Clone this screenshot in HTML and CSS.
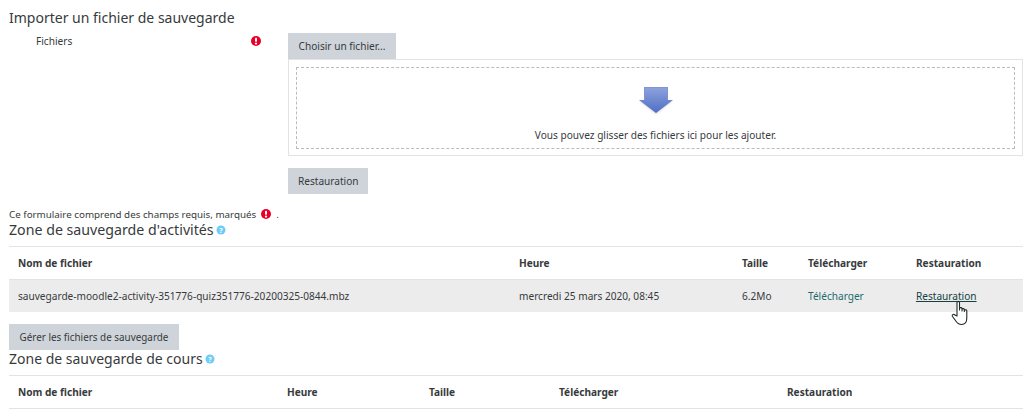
FILE: index.html
```html
<!DOCTYPE html>
<html lang="fr">
<head>
<meta charset="utf-8">
<title>Importer un fichier de sauvegarde</title>
<link rel="stylesheet" href="styles.css">
</head>
<body>
<main class="page">
  <h3 class="title first">Importer un fichier de sauvegarde</h3>
  <form class="form-row">
    <div class="label-col">
      <span>Fichiers</span>
      <svg class="req" viewBox="0 0 10 10" width="10" height="10"><circle cx="5" cy="5" r="5" fill="#e8002a"/><rect x="4" y="1.8" width="2" height="4" rx=".7" fill="#fff"/><circle cx="5" cy="7.6" r="1.1" fill="#fff"/></svg>
    </div>
    <div class="field-col">
      <button type="button" class="btn choose">Choisir un fichier...</button>
      <div class="drop-outer">
        <div class="drop">
          <svg class="arrow" viewBox="0 0 36 30" width="36" height="30">
            <defs>
              <linearGradient id="g" x1="0" y1="0" x2="0" y2="1"><stop offset="0" stop-color="#8fa3dc"/><stop offset="1" stop-color="#4f6fc6"/></linearGradient>
              <filter id="s" x="-20%" y="-20%" width="140%" height="150%"><feGaussianBlur stdDeviation="1"/></filter>
            </defs>
            <path d="M18 28 L2 15 H7 V3 H29 V15 H34 Z" fill="#999" opacity=".45" filter="url(#s)"/>
            <path d="M18 27 L1 14 H6 V1 H30 V14 H35 Z" fill="url(#g)"/>
            <path d="M6.500 14 V1.500 H29.500 V14" fill="none" stroke="#7f96d6"/>
          </svg>
          <p class="drop-text">Vous pouvez glisser des fichiers ici pour les ajouter.</p>
        </div>
      </div>
      <button type="button" class="btn restore">Restauration</button>
    </div>
  </form>
  <p class="required-note">Ce formulaire comprend des champs requis, marqués <svg class="req inline" viewBox="0 0 10 10" width="10" height="10"><circle cx="5" cy="5" r="5" fill="#e8002a"/><rect x="4" y="1.8" width="2" height="4" rx=".7" fill="#fff"/><circle cx="5" cy="7.6" r="1.1" fill="#fff"/></svg> <span class="dot">.</span></p>
  <h3 class="title wide">Zone de sauvegarde d'activités<svg class="help" viewBox="0 0 10 10" width="10" height="10"><circle cx="5" cy="5" r="4.500" fill="#6fcdf5"/><text x="5" y="7.500" text-anchor="middle" class="help-q">?</text></svg></h3>
  <table class="files activity">
    <thead><tr><th class="c1">Nom de fichier</th><th class="c2">Heure</th><th class="c3">Taille</th><th class="c4">Télécharger</th><th class="c5">Restauration</th></tr></thead>
    <tbody><tr><td>sauvegarde-moodle2-activity-351776-quiz351776-20200325-0844.mbz</td><td>mercredi 25 mars 2020, 08:45</td><td>6.2Mo</td><td><a class="dl" href="#">Télécharger</a></td><td class="restore-cell"><a class="rs" href="#">Restauration</a><svg class="hand" viewBox="0 0 18 26" width="18" height="26"><path d="M6 16 V2.500 C6 1 8.500 1 8.500 2.500 V10 V8.500 C8.500 7.300 11 7.300 11 8.500 V11 V9.500 C11 8.300 13.300 8.300 13.300 9.500 V11.500 V10.500 C13.300 9.500 15.800 9.500 15.800 10.500 V18 C15.800 22 14 24.500 10.500 24.500 C7.500 24.500 6 23 4.500 20.500 L1.500 16.500 C0.500 15 2.500 13.500 4 15 Z" fill="#fff" stroke="#1c2b2b" stroke-width="1.100" stroke-linejoin="round"/></svg></td></tr></tbody>
  </table>
  <button type="button" class="btn manage">Gérer les fichiers de sauvegarde</button>
  <h3 class="title second">Zone de sauvegarde de cours<svg class="help" viewBox="0 0 10 10" width="10" height="10"><circle cx="5" cy="5" r="4.500" fill="#6fcdf5"/><text x="5" y="7.500" text-anchor="middle" class="help-q">?</text></svg></h3>
  <table class="files course">
    <thead><tr><th class="k1">Nom de fichier</th><th class="k2">Heure</th><th class="k3">Taille</th><th class="k4">Télécharger</th><th class="k5">Restauration</th></tr></thead>
  </table>
</main>
</body>
</html>
```
FILE: styles.css
```css
* { box-sizing: border-box; }
html, body { margin: 0; padding: 0; overflow: hidden; }
body { background: #fff; color: #373a3c; font-family: "Noto Sans", "Open Sans", sans-serif; font-size: 10.100px; }
.page { padding: 0 11px 0 9px; height: 411px; overflow: hidden; }
.title { margin: 0; font-weight: 400; font-size: 14px; line-height: 18px; color: #373a3c; }
.title.first { padding-top: 9px; height: 33px; }
.title.wide { font-size: 14.200px; }
.form-row { display: flex; }
.label-col { width: 279px; display: flex; justify-content: space-between; padding: 3px 27px 0 27px; height: 14px; align-items: flex-start; line-height: 11px; }
.req { display: block; }
.req.inline { display: inline-block; vertical-align: -1px; margin: 0 2px; }
.field-col { flex: 1; min-width: 0; }
.btn { display: block; border: 0; background: #ced4da; color: #373a3c; font: inherit; height: 26px; padding: 0 10px; }
.btn.choose { width: 108px; }
.drop-outer { border: 1px solid #e3e3e3; height: 97px; padding: 7px; }
.drop { border: 1px dashed #bbb; height: 82px; display: flex; flex-direction: column; align-items: center; padding-top: 18px; }
.arrow { display: block; }
.drop-text { margin: 13px 0 0; line-height: 13px; }
.btn.restore { margin-top: 12px; width: 80px; }
.required-note { margin: 14px 0 0; line-height: 13px; height: 13px; font-size: 9.800px; }
.dot { margin-left: 1px; }
.help { vertical-align: 0; margin-left: 2px; }
.help-q { font-size: 7px; font-weight: 700; fill: #fff; font-family: "Noto Sans", sans-serif; }
.files { border-collapse: collapse; width: 1014px; table-layout: fixed; margin-top: 7px; }
.files th { text-align: left; font-weight: 700; color: #373a3c; height: 33px; padding: 0 9px; border-top: 1px solid #e3e3e3; border-bottom: 1px solid #e3e3e3; }
.files td { height: 32px; padding: 0 9px; background: #ececec; }
.c1 { width: 501px; } .c2 { width: 223px; } .c3 { width: 66px; } .c4 { width: 108px; } .c5 { width: 116px; }
.k1 { width: 269px; } .k2 { width: 142px; } .k3 { width: 130px; } .k4 { width: 228px; } .k5 { width: 245px; }
.dl { color: #1a6d6d; text-decoration: none; }
.rs { color: #14403f; text-decoration: underline; }
.restore-cell { position: relative; }
.hand { position: absolute; left: 44px; top: 20px; }
.btn.manage { margin-top: 12px; width: 170px; font-size: 9.900px; }
.title.second { margin-top: 0; height: 19px; }
.course { margin-top: 6px; }
.course th { height: 33px; }
```
